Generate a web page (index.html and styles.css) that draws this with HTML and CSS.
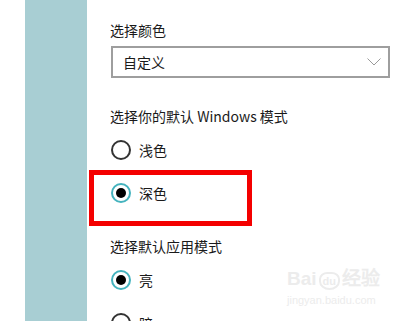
FILE: index.html
```html
<!DOCTYPE html>
<html lang="zh-CN">
<head>
  <meta charset="UTF-8">
  <meta name="viewport" content="width=device-width, initial-scale=1.0">
  <title>颜色</title>
  <link rel="stylesheet" href="styles.css">
</head>
<body>
  <div class="page">
    <div class="gutter"></div>
    <div class="sidebar"></div>

    <div class="settings">
      <div class="label first">选择颜色</div>
      <div class="select">
        <span>自定义</span>
        <svg class="chevron" width="14" height="8" viewBox="0 0 14 8">
          <path d="M0.5 0.5 L7 7 L13.5 0.5" fill="none" stroke="#9a9a9a" stroke-width="1"/>
        </svg>
      </div>

      <div class="label section">选择你的默认 Windows 模式</div>
      <div class="radio-row top">
        <span class="radio"></span>
        <span>浅色</span>
      </div>
      <div class="radio-row">
        <span class="radio checked"></span>
        <span>深色</span>
      </div>

      <div class="label section2">选择默认应用模式</div>
      <div class="radio-row top">
        <span class="radio checked"></span>
        <span>亮</span>
      </div>
      <div class="radio-row">
        <span class="radio"></span>
        <span>暗</span>
      </div>

      <!-- red marker around the selected option -->
      <div class="highlight"></div>
    </div>

    <div class="watermark">
      <div class="wm-logo">Bai<span class="paw">du</span>经验</div>
      <div class="wm-url">jingyan.baidu.com</div>
    </div>
  </div>
</body>
</html>
```

FILE: styles.css
```css
body {
  margin: 0;
  padding: 0;
  background-color: #fff;
  font-family: "Noto Sans CJK SC", "Noto Sans", sans-serif;
  color: #1a1a1a;
  overflow: hidden;
}

.page {
  position: relative;
  display: flex;
  width: 405px;
  height: 321px;
  overflow: hidden;
}

.gutter {
  width: 25px;
  flex: none;
}

.sidebar {
  width: 62px;
  flex: none;
  background-color: #a8ced3;
}

.settings {
  position: relative;
  flex: 1;
  padding: 20px 15px 0 23px;
}

.label {
  font-size: 14px;
  line-height: 20px;
  height: 20px;
}

.section {
  margin-top: 28px;
}

.section2 {
  margin-top: 31px;
}

.select {
  margin-top: 6px;
  margin-left: 1px;
  height: 28px;
  border: 2px solid #9e9e9e;
  display: flex;
  align-items: center;
  justify-content: space-between;
  padding: 0 7px 0 10px;
  font-size: 14px;
}

.chevron {
  display: block;
}

.radio-row {
  display: flex;
  align-items: center;
  gap: 8px;
  height: 24px;
  margin-top: 19px;
  margin-left: 1px;
  font-size: 14px;
}

.radio-row.top {
  margin-top: 12px;
}

.radio {
  width: 16px;
  height: 16px;
  border: 2px solid #333;
  border-radius: 50%;
  position: relative;
  flex: none;
}

.radio.checked {
  border: 2px solid #44b3be;
}

.radio.checked::after {
  content: "";
  position: absolute;
  left: 3px;
  top: 3px;
  width: 10px;
  height: 10px;
  border-radius: 50%;
  background-color: #000;
}

.highlight {
  position: absolute;
  left: 2px;
  top: 170px;
  width: 153px;
  height: 46px;
  border: 5px solid #f40000;
}

.watermark {
  position: absolute;
  left: 287px;
  top: 264px;
  color: #ececec;
  font-family: "Liberation Sans", sans-serif;
}

.wm-logo {
  font-size: 19px;
  font-weight: bold;
  line-height: 30px;
}

.paw {
  display: inline-block;
  font-size: 11px;
  border: 2px solid #ececec;
  border-radius: 40% 40% 50% 50%;
  padding: 0 2px;
  margin: 0 2px;
  line-height: 14px;
}

.wm-url {
  font-size: 11px;
  line-height: 12px;
}
```
